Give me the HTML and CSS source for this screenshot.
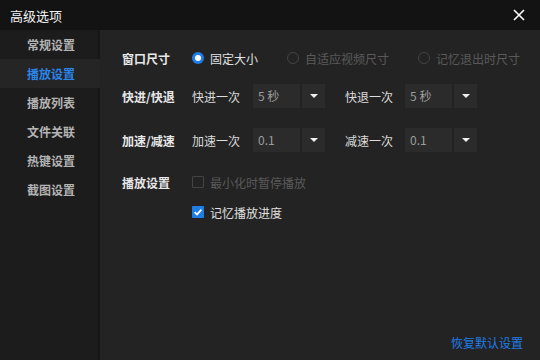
FILE: index.html
```html
<!DOCTYPE HTML>
<html>
	<head>
		<meta charset="utf-8">
		<title>高级选项</title>
		<link rel="stylesheet" href="styles.css">
	</head>
	<body>
		<div class="window">
			<div class="titlebar">
				<span class="title">高级选项</span>
				<svg class="close" width="12" height="12" viewBox="0 0 12 12"><path d="M1 1L11 11M11 1L1 11" stroke="#fff" stroke-width="1.6"/></svg>
			</div>
			<div class="main">
				<ul class="sidebar">
					<li>常规设置</li>
					<li class="active">播放设置</li>
					<li>播放列表</li>
					<li>文件关联</li>
					<li>热键设置</li>
					<li>截图设置</li>
				</ul>
				<div class="content">
					<div class="row row-size">
						<span class="label">窗口尺寸</span>
						<span class="option"><span class="radio checked"></span>固定大小</span>
						<span class="option disabled"><span class="radio"></span>自适应视频尺寸</span>
						<span class="option disabled"><span class="radio"></span>记忆退出时尺寸</span>
					</div>
					<div class="row row-seek">
						<span class="label">快进/快退</span>
						<span class="field">快进一次</span>
						<span class="select"><span class="value">5 秒</span><span class="arrow"></span></span>
						<span class="field second">快退一次</span>
						<span class="select"><span class="value">5 秒</span><span class="arrow"></span></span>
					</div>
					<div class="row row-speed">
						<span class="label">加速/减速</span>
						<span class="field">加速一次</span>
						<span class="select"><span class="value">0.1</span><span class="arrow"></span></span>
						<span class="field second">减速一次</span>
						<span class="select"><span class="value">0.1</span><span class="arrow"></span></span>
					</div>
					<div class="row row-play">
						<span class="label">播放设置</span>
						<span class="option disabled"><span class="check"></span>最小化时暂停播放</span>
					</div>
					<div class="row row-resume">
						<span class="label"></span>
						<span class="option"><span class="check checked"><svg width="12" height="12" viewBox="0 0 12 12"><path d="M2.6 6.2L5 8.4L9.4 3.6" fill="none" stroke="#fff" stroke-width="1.8"/></svg></span>记忆播放进度</span>
					</div>
					<a class="reset">恢复默认设置</a>
				</div>
			</div>
		</div>
	</body>
</html>
```

FILE: styles.css
```css
html, body {
	margin: 0;
	padding: 0;
	background: #121212;
}

body {
	font-family: "Noto Sans CJK SC", "Noto Sans", sans-serif;
	font-size: 12px;
	color: #d8d8d8;
}

.window {
	width: 540px;
	height: 360px;
	display: flex;
	flex-direction: column;
}

.titlebar {
	height: 30px;
	flex-shrink: 0;
	display: flex;
	align-items: center;
	justify-content: space-between;
	padding: 0 15px 0 10px;
	background: #131313;
}

.title {
	font-size: 13px;
	color: #f2f2f2;
}

.main {
	flex: 1;
	display: flex;
	min-height: 0;
}

.sidebar {
	width: 100px;
	margin: 0;
	padding: 0;
	list-style: none;
	background: #1c1c1c;
	box-shadow: inset -3px 0 2px -1px #181818;
}

.sidebar li {
	height: 29px;
	line-height: 29px;
	padding-left: 27px;
	font-weight: 700;
	color: #b4b4b4;
}

.sidebar li.active {
	background: #252525;
	color: #2a86ea;
}

.content {
	flex: 1;
	display: flex;
	flex-direction: column;
	padding: 0 17px 9px 22px;
	background: #232323;
}

.row {
	height: 24px;
	display: flex;
	align-items: center;
}

.row-size { margin-top: 16px; }
.row-seek { margin-top: 14px; }
.row-speed { margin-top: 20px; }
.row-play { margin-top: 18px; }
.row-resume { margin-top: 6px; }

.label {
	width: 70px;
	flex-shrink: 0;
	font-weight: 700;
	color: #e8e8e8;
}

.option {
	display: flex;
	align-items: center;
	margin-right: 29px;
	color: #e0e0e0;
}

.option:last-child {
	margin-right: 0;
}

.option.disabled {
	color: #5a5a5a;
}

.radio {
	width: 12px;
	height: 12px;
	box-sizing: border-box;
	border-radius: 50%;
	border: 1px solid #444;
	margin-right: 6px;
	position: relative;
}

.radio.checked {
	border: none;
	background: #1f7de6;
}

.radio.checked::after {
	content: "";
	position: absolute;
	left: 3px;
	top: 3px;
	width: 6px;
	height: 6px;
	border-radius: 50%;
	background: #fff;
}

.check {
	width: 12px;
	height: 12px;
	box-sizing: border-box;
	border: 1px solid #444;
	border-radius: 1px;
	margin-right: 6px;
	display: flex;
}

.check.checked {
	border: none;
	background: #1f7de6;
}

.field {
	color: #dcdcdc;
	margin-right: 13px;
}

.field.second {
	margin-left: 20px;
	margin-right: 12px;
}

.select {
	width: 72px;
	height: 24px;
	display: flex;
}

.select .value {
	width: 42px;
	padding-left: 5px;
	line-height: 24px;
	background: #2b2b2b;
	color: #9c9c9c;
}

.select .arrow {
	width: 23px;
	margin-left: 2px;
	background: #2b2b2b;
	position: relative;
}

.select .arrow::after {
	content: "";
	position: absolute;
	left: 8px;
	top: 10px;
	border-left: 4px solid transparent;
	border-right: 4px solid transparent;
	border-top: 4px solid #f0f0f0;
}

.reset {
	margin-top: auto;
	align-self: flex-end;
	color: #1f7de6;
	cursor: pointer;
}
```
